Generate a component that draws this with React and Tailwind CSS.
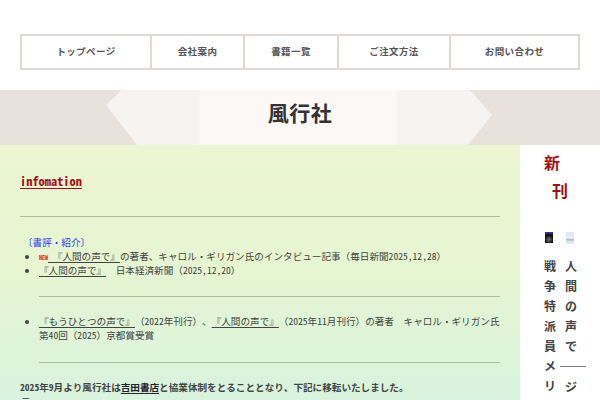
import React from 'react';

const navItems = [
  { label: 'トップページ', width: 'w-[130px]' },
  { label: '会社案内', width: 'w-[93px]' },
  { label: '書籍一覧', width: 'w-[94px]' },
  { label: 'ご注文方法', width: 'w-[112px]' },
  { label: 'お問い合わせ', width: 'flex-1' },
];

const Rule = ({ className = '' }) => <div className={`h-px bg-[#b4b7a6] ${className}`} />;

const BookLink = ({ children }) => <a className="text-[#444] underline underline-offset-2">{children}</a>;

const App = () => {
  return (
    <div className="h-screen overflow-hidden bg-white font-['Noto_Sans_CJK_JP',sans-serif]">
      {/* Nav */}
      <div className="px-5 pt-[34px] pb-5">
        <div className="flex h-9 border-2 border-[#e2d8d3]">
          {navItems.map((item, index) => (
            <div
              key={item.label}
              className={`${item.width} flex items-center justify-center pb-[1px] text-[9.5px] font-bold tracking-[0.4px] text-[#555] ${index < navItems.length - 1 ? 'border-r-2 border-[#e2d8d3]' : ''}`}
            >
              {item.label}
            </div>
          ))}
        </div>
      </div>

      {/* Title band */}
      <div className="relative flex h-[55px] items-center justify-center bg-[#e9e1dc] pb-[10px]">
        <div className="absolute inset-0 bg-[linear-gradient(90deg,#f7f3f0_0%,#f7f3f0_33%,#fbf8f6_33.5%,#fbf8f6_66%,#f7f3f0_66.5%,#f7f3f0_100%)] [clip-path:polygon(122px_0,470px_0,492px_25px,468px_55px,137px_55px,106px_15px)]" />
        <h1 className="relative text-[21px] leading-none font-bold tracking-[0.5px] text-[#333]">風行社</h1>
      </div>

      <div className="flex">
        {/* Main */}
        <div className="h-[255px] w-[520px] overflow-hidden bg-[linear-gradient(180deg,#eef5d2_0%,#e6f5d2_50%,#d9f3de_100%)] px-5 font-['Noto_Sans_Mono_CJK_JP','Noto_Sans_CJK_JP',monospace] text-[9.6px] leading-[14px] text-[#444] [text-spacing-trim:space-all]">
          <h2 className="mt-[29px] h-[14px] text-[12.4px] leading-[14px] font-bold text-[#a50f14] underline underline-offset-2">infomation</h2>
          <Rule className="mt-[28px]" />
          <p className="mt-[18px] pl-[3px] text-[#2a3bf0]">〔書評・紹介〕</p>
          <ul className="list-disc pl-[19px]">
            <li className="h-[14px]">
              <span className="text-[6px] leading-none font-bold text-[#e02020]">NEW</span>
              <BookLink> 『人間の声で』</BookLink>の著者、キャロル・ギリガン氏のインタビュー記事（毎日新聞2025,12,28）
            </li>
            <li className="h-[14px]">
              <BookLink>『人間の声で』</BookLink>　日本経済新聞（2025,12,20）
            </li>
          </ul>
          <Rule className="mt-[19px] ml-[19px]" />
          <ul className="mt-[17px] list-disc pl-[19px]">
            <li>
              <BookLink>『もうひとつの声で』</BookLink>（2022年刊行）、<BookLink>『人間の声で』</BookLink>（2025年11月刊行）の著者　キャロル・ギリガン氏
              <br />
              第40回（2025）京都賞受賞
            </li>
          </ul>
          <Rule className="mt-[20px] ml-[19px]" />
          <p className="mt-[17px] font-bold">
            2025年9月より風行社は<a className="text-[#223] underline underline-offset-2">吉田書店</a>と協業体制をとることとなり、下記に移転いたしました。
          </p>
          <p className="pl-[1px]">〒</p>
        </div>

        {/* Sidebar */}
        <div className="flex-1 pt-[3px] pl-6 text-[12px] leading-[20px] font-bold text-[#444]">
          <p className="text-[16px] leading-[28px] text-[#a50f14]">新</p>
          <p className="pl-2 text-[16px] leading-[28px] text-[#a50f14]">刊</p>
          <div className="mt-[28px] flex">
            <div className="w-[16px]">
              <div className="ml-[1px] h-[11px] w-2 border-t-2 border-[#2b2f9e] bg-[radial-gradient(circle_at_50%_60%,#777_0%,#111_60%)]" />
              <p className="mt-[13px] w-[12px] break-all">戦争特派員メリ</p>
            </div>
            <div className="w-[26px]">
              <div className="ml-[6px] h-[12px] w-2 bg-[linear-gradient(180deg,#dbe6f4_0%,#eaf1f8_50%,#aab4bc_65%,#dcecf2_80%)]" />
              <p className="mt-[12px] w-[17px] break-all pl-[5px]">人間の声で</p>
              <div className="my-[10px] h-px bg-[#777]" />
              <p className="pl-[5px]">ジ</p>
            </div>
          </div>
        </div>
      </div>
    </div>
  );
};

export default App;
